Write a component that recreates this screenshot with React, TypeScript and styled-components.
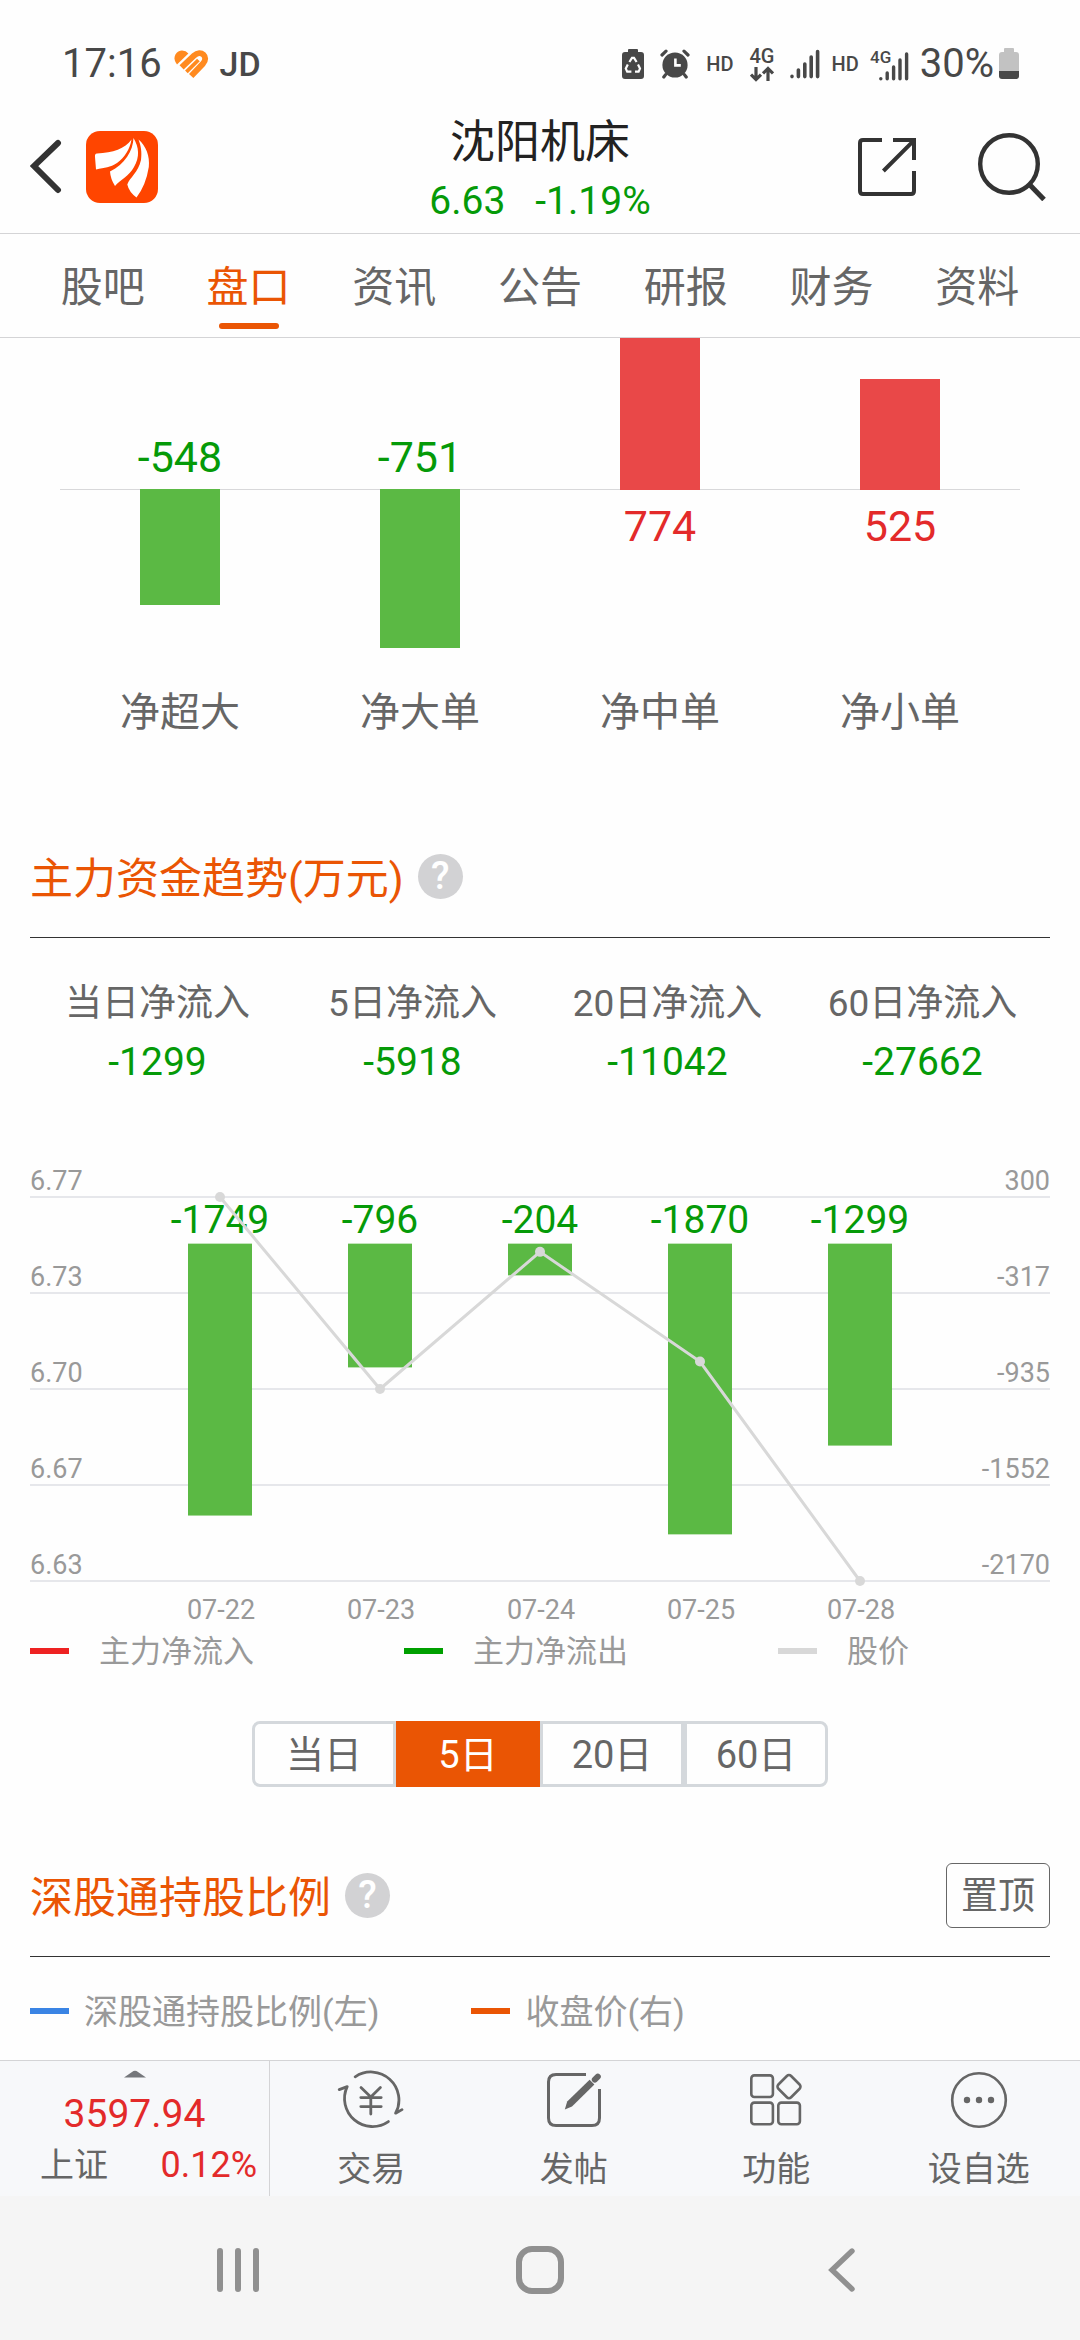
import React, { useState } from "react";
import styled, { createGlobalStyle } from "styled-components";

const color = {
  green: "#059a08",
  bar: "#5bb944",
  red: "#e32a2a",
  barRed: "#e94848",
  orange: "#ea5504",
  title: "#222222",
  text: "#666666",
  muted: "#999999",
  rule: "#d4d4d6",
  grid: "#e6e7eb",
  price: "#d8d8d8",
};

const GlobalStyle = createGlobalStyle`
  *, *::before, *::after { box-sizing: border-box; }
  body {
    margin: 0;
    background: #fefefe;
    font-family: Roboto, "Noto Sans CJK SC", sans-serif;
    color: ${color.text};
  }
  button {
    margin: 0;
    padding: 0;
    border: 0;
    background: none;
    font: inherit;
    color: inherit;
    cursor: pointer;
  }
  svg { display: block; flex: none; }
  h1, h2, p, dl, dd, ul { margin: 0; padding: 0; font-weight: 400; }
  ul { list-style: none; }
`;

const Page = styled.div`
  display: flex;
  flex-direction: column;
  min-height: 100vh;
`;

/* ---------- system status bar ---------- */

const StatusBar = styled.div`
  display: flex;
  align-items: center;
  justify-content: space-between;
  padding: 43px 61px 0 62px;
  color: #484848;
`;

const StatusGroup = styled.div<{ $gap: number }>`
  display: flex;
  align-items: center;
  gap: ${(p) => p.$gap}px;
  height: 42px;
`;

const StatusText = styled.span`
  font-size: 40px;
  line-height: 42px;
`;

const BrandText = styled.span`
  font-size: 34px;
  line-height: 42px;
  font-weight: 500;
`;

const SmallBadge = styled.span`
  font-size: 20px;
  line-height: 42px;
  font-weight: 500;
`;

const NetworkStack = styled.span`
  display: flex;
  flex-direction: column;
  align-items: center;
  font-size: 20px;
  line-height: 20px;
  font-weight: 500;
`;

/* ---------- stock header ---------- */

const Header = styled.header`
  display: grid;
  grid-template-columns: 1fr auto 1fr;
  align-items: center;
  height: 149px;
  padding: 16px 30px 0;
  border-bottom: 1px solid ${color.rule};
`;

const HeaderSide = styled.div<{ $end?: boolean }>`
  display: flex;
  align-items: center;
  justify-content: ${(p) => (p.$end ? "flex-end" : "flex-start")};
  gap: ${(p) => (p.$end ? 62 : 24)}px;
  padding-right: ${(p) => (p.$end ? 4 : 0)}px;
`;

const StockBlock = styled.div`
  padding-top: 10px;
  text-align: center;
`;

const StockName = styled.h1`
  font-size: 45px;
  line-height: 58px;
  color: ${color.title};
`;

const StockQuote = styled.p`
  display: flex;
  justify-content: center;
  gap: 30px;
  font-size: 39px;
  line-height: 58px;
  color: ${color.green};
`;

const TabBar = styled.nav`
  display: flex;
  padding: 0 30px;
  border-bottom: 1px solid ${color.rule};
`;

const Tab = styled.button<{ $active: boolean }>`
  flex: 1;
  display: flex;
  flex-direction: column;
  align-items: center;
  gap: 5px;
  padding: 24px 0 8px;
  font-size: 42px;
  line-height: 60px;
  color: ${(p) => (p.$active ? color.orange : color.text)};

  &::after {
    content: "";
    width: 60px;
    height: 6px;
    border-radius: 3px;
    background: ${(p) => (p.$active ? color.orange : "transparent")};
  }
`;

/* ---------- content ---------- */

const Main = styled.main`
  flex: 1;
`;

const Chart = styled.svg`
  width: 100%;
  height: auto;
`;

const Section = styled.section<{ $top: number }>`
  padding: ${(p) => p.$top}px 30px 0;
`;

const SectionHead = styled.div`
  display: flex;
  align-items: center;
  height: 94px;
  padding-bottom: 28px;
  border-bottom: 1px solid #333333;
`;

const SectionTitle = styled.h2`
  padding-top: 4px;
  font-size: 43px;
  line-height: 60px;
  color: ${color.orange};
`;

const HelpButton = styled.button`
  width: 45px;
  height: 45px;
  margin-left: 14px;
  border-radius: 50%;
  background: #d2d2d4;
  color: #ffffff;
  font-size: 38px;
  line-height: 45px;
  font-weight: 500;
  text-align: center;
`;

const PinButton = styled.button`
  width: 104px;
  height: 65px;
  margin-left: auto;
  padding-top: 2px;
  border: 1px solid ${color.text};
  border-radius: 6px;
  font-size: 37px;
  line-height: 60px;
  white-space: nowrap;
`;

const Stats = styled.dl`
  display: grid;
  grid-template-columns: repeat(4, 1fr);
  padding: 37px 0 69px;
  text-align: center;
  line-height: 58px;
`;

const StatLabel = styled.dt`
  font-size: 37px;
`;

const StatValue = styled.dd`
  font-size: 39px;
  color: ${color.green};
`;

const FlowLegend = styled.ul`
  display: grid;
  grid-template-columns: 11fr 11fr 8fr;
  padding-top: 2px;
`;

const HoldingLegend = styled.ul`
  display: flex;
  gap: 92px;
  padding: 31px 0 26px;
`;

const LegendItem = styled.li<{ $swatch: string; $gap: number; $size: number }>`
  display: flex;
  align-items: center;
  gap: ${(p) => p.$gap}px;
  font-size: ${(p) => p.$size}px;
  line-height: 46px;
  color: ${color.muted};
  white-space: nowrap;

  &::before {
    content: "";
    width: 39px;
    height: 6px;
    background: ${(p) => p.$swatch};
  }
`;

const LegendText = styled.span`
  padding-top: 2px;
  line-height: 44px;
`;

const Segments = styled.div`
  display: flex;
  justify-content: center;
  padding-top: 47px;
`;

const Segment = styled.button<{ $active: boolean }>`
  width: 144px;
  height: 66px;
  padding-top: 2px;
  border: 3px solid ${(p) => (p.$active ? color.orange : "#d4d8dc")};
  background: ${(p) => (p.$active ? color.orange : "transparent")};
  color: ${(p) => (p.$active ? "#ffffff" : color.text)};
  font-size: 38px;
  line-height: 58px;

  &:first-child { border-radius: 8px 0 0 8px; }
  &:last-child { border-radius: 0 8px 8px 0; }
`;

/* ---------- bottom bars ---------- */

const BottomBar = styled.footer`
  display: flex;
  height: 136px;
  border-top: 1px solid ${color.rule};
  background: #f7f8fa;
`;

const IndexPanel = styled.button`
  display: flex;
  flex-direction: column;
  align-items: center;
  flex: 0 0 25%;
  padding-top: 9px;
  border-right: 1px solid ${color.rule};
  color: ${color.red};
`;

const IndexValue = styled.span`
  margin-top: 11px;
  font-size: 39px;
  line-height: 50px;
`;

const IndexRow = styled.span`
  display: flex;
  justify-content: space-between;
  align-self: stretch;
  padding: 0 12px 0 40px;
  font-size: 36px;
  line-height: 52px;
`;

const IndexName = styled.span`
  font-size: 34px;
  color: ${color.text};
`;

const Action = styled.button`
  flex: 1;
  display: flex;
  flex-direction: column;
  align-items: center;
  gap: 15px;
  padding-top: 9px;
  font-size: 34px;
  line-height: 48px;
`;

const SystemNav = styled.div`
  display: flex;
  height: 144px;
  padding: 0 8%;
  background: #f5f5f5;
`;

const SystemButton = styled.button`
  flex: 1;
  display: flex;
  align-items: center;
  justify-content: center;
  padding-top: 4px;
`;

/* ---------- icons ---------- */

const HeartLogo = () => (
  <svg width="36" height="30" viewBox="0 0 36 30" fill="none" stroke="#ff8a1f" aria-hidden="true">
    <path d="M4 15.4C-1 10 2 2 9 1.6Q13 1.6 15.4 4.4Z" fill="#ff8a1f" stroke="none" />
    <path d="M8.600 18.400 21 6.600C28 0 36 8 30 14.600L18.200 27" strokeWidth="6" />
    <path d="M13.400 22.800 25.400 11" strokeWidth="3.800" />
  </svg>
);

const SaverBattery = () => (
  <svg width="22" height="32" viewBox="0 0 22 32" fill="none" aria-hidden="true">
    <path d="M7 1h8q1 0 1 1v2h3q3 0 3 3v21q0 3-3 3H3q-3 0-3-3V7q0-3 3-3h3V2q0-1 1-1z" fill="#484848" />
    <path d="M7.400 14 10 9.800h2l2.600 4.200M16 16.600l2 4-1.400 3H13M9.400 23.600H5.200l-1.400-3 2-4" stroke="#fff" strokeWidth="2.200" />
  </svg>
);

const AlarmClock = () => (
  <svg width="30" height="30" viewBox="0 0 30 30" fill="none" stroke="#484848" strokeLinecap="round" aria-hidden="true">
    <circle cx="15" cy="16" r="12.600" fill="#484848" stroke="none" />
    <path d="M2 6 6 2.200M28 6l-4-3.800M5.600 25.600 3.800 28M24.400 25.600l1.800 2.400" strokeWidth="3.200" />
    <path d="M15.400 9.400v7h5.400" stroke="#fff" strokeWidth="2.600" strokeLinecap="butt" />
  </svg>
);

const DataArrows = () => (
  <svg width="24" height="16" viewBox="0 0 24 16" fill="none" stroke="#484848" strokeWidth="3.200" aria-hidden="true">
    <path d="M6 1v12M1 8.600l5 5 5-5M18 15V3M13 7.400l5-5 5 5" />
  </svg>
);

const SignalBars = () => (
  <svg width="30" height="30" viewBox="0 0 30 30" stroke="#484848" strokeWidth="3.600" strokeLinecap="round" aria-hidden="true">
    <path d="M2 27.400v.200M8.400 21v6.600M14.800 15v12.600M21.200 8v19.600M27.600 2.600v25" />
  </svg>
);

const SignalWithNetwork = () => (
  <svg width="39" height="36" viewBox="0 0 39 36" stroke="#484848" strokeWidth="3.400" strokeLinecap="round" aria-hidden="true">
    <text x="0" y="17" fill="#484848" stroke="none" fontSize="17" fontWeight="500">4G</text>
    <path d="M10.800 32.600v.200M17.200 27v5.800M23.600 21v11.800M30 14v18.800M36.600 8v24.800" />
  </svg>
);

const BatteryLevel = () => (
  <svg width="20" height="34" viewBox="0 0 20 34" aria-hidden="true">
    <path d="M6 1h8q1 0 1 1v3h2q3 0 3 3v16H0V8q0-3 3-3h2V2q0-1 1-1z" fill="#c2c2c2" />
    <path d="M0 24h20v5q0 3-3 3H3q-3 0-3-3z" fill="#484848" />
  </svg>
);

const BackIcon = () => (
  <svg width="32" height="56" viewBox="0 0 32 56" fill="none" stroke="#333" strokeWidth="6" strokeLinecap="round" aria-hidden="true">
    <path d="M28 4 4 27l24 24" />
  </svg>
);

const AppLogo = () => (
  <svg width="72" height="72" viewBox="0 0 72 72" fill="#fff" aria-hidden="true">
    <rect width="72" height="72" rx="14" fill="#ff4500" />
    <path d="M45.500 8.500C39 18 27 21.500 11 22.500Q8.500 22.800 9 26L10 38.600C19 36 24 37 31 32C39 26 44 18 45.500 8.500Z" />
    <path d="M47.500 7C47 20 39 33 24 40.500Q24.500 48 29 55C34 49 43 45 48 36C54 26 53 16 47.500 7Z" />
    <path d="M52.500 8.500C60 15 64 25 62.800 36Q60 54 50.500 66.500Q43 61 41.300 53.500C44 46 52 42 55 29C56 21 55 15 52.500 8.500Z" />
  </svg>
);

const ShareIcon = () => (
  <svg width="58" height="58" viewBox="0 0 58 58" fill="none" stroke="#333" strokeWidth="4" aria-hidden="true">
    <path d="M24 2H5Q2 2 2 5v48q0 3 3 3h48q3 0 3-3V33M35 2h21v20M25.400 33 55 3.400" />
  </svg>
);

const SearchIcon = () => (
  <svg width="68" height="68" viewBox="0 0 68 68" fill="none" stroke="#333" strokeWidth="4.400" aria-hidden="true">
    <circle cx="31" cy="31" r="28.800" />
    <path d="m51.500 51.500 14.500 15" strokeWidth="5" />
  </svg>
);

const TradeIcon = () => (
  <svg width="68" height="60" viewBox="0 0 68 60" fill="none" stroke={color.text} strokeWidth="2.800" strokeLinecap="round" strokeLinejoin="round" aria-hidden="true">
    <path d="M18.200 6.800A28 28 0 0 1 58.600 43.200L65 39.600" />
    <path d="M2.200 19.600 10.200 16.600A28 28 0 0 0 51.400 51.600" />
    <path d="m24 17.600 9.800 9.400 9.600-9.400M33.800 27v17M23.800 27.600h20.400M23.800 36.600h20.400" />
  </svg>
);

const PostIcon = () => (
  <svg width="60" height="60" viewBox="0 0 60 60" fill="none" stroke={color.text} strokeWidth="3" aria-hidden="true">
    <path d="M42 4.500H12q-7.500 0-7.500 7.500v36q0 7.500 7.500 7.500h36q7.500 0 7.500-7.500V19" />
    <path d="m20.800 39.400 2.400-7.800L45.600 9.800l4.800 4.800L28 36.600z" fill={color.text} stroke="none" />
    <path d="m50.800 9.600 3-3" strokeWidth="6" strokeLinecap="round" />
  </svg>
);

const GridIcon = () => (
  <svg width="60" height="60" viewBox="0 0 60 60" fill="none" stroke={color.text} strokeWidth="2.600" aria-hidden="true">
    <rect x="5.300" y="5.400" width="21.600" height="21.600" rx="3" />
    <rect x="5.300" y="32.600" width="21.600" height="21.600" rx="3" />
    <rect x="32.300" y="32.600" width="21.600" height="21.600" rx="3" />
    <rect x="34" y="7.600" width="18" height="18" rx="3" transform="rotate(45 43 16.600)" />
  </svg>
);

const MoreIcon = () => (
  <svg width="60" height="60" viewBox="0 0 60 60" fill={color.text} aria-hidden="true">
    <circle cx="30" cy="30" r="26.800" fill="none" stroke={color.text} strokeWidth="2.600" />
    <circle cx="18" cy="30" r="3.200" />
    <circle cx="30" cy="30" r="3.200" />
    <circle cx="42" cy="30" r="3.200" />
  </svg>
);

const RecentsIcon = () => (
  <svg width="44" height="48" viewBox="0 0 44 48" stroke="#909090" strokeWidth="6" strokeLinecap="round" aria-hidden="true">
    <path d="M4 5v38M22 5v38M40 5v38" />
  </svg>
);

const HomeIcon = () => (
  <svg width="50" height="50" viewBox="0 0 50 50" fill="none" stroke="#909090" strokeWidth="6" aria-hidden="true">
    <rect x="4" y="4" width="42" height="42" rx="13" />
  </svg>
);

const NavBackIcon = () => (
  <svg width="28" height="48" viewBox="0 0 28 48" fill="none" stroke="#909090" strokeWidth="5.400" strokeLinecap="round" aria-hidden="true">
    <path d="M24 5 4 24l20 19" />
  </svg>
);

/* ---------- charts ---------- */

const orders = [
  { label: "净超大", value: -548 },
  { label: "净大单", value: -751 },
  { label: "净中单", value: 774 },
  { label: "净小单", value: 525 },
];

function OrderChart() {
  const zero = 152;
  const scale = 0.2117;
  return (
    <Chart viewBox="0 0 1080 422" role="img" aria-label="净流入分布" textAnchor="middle">
      <rect x="60" y="151" width="960" height="1" fill="#d8d8da" />
      {orders.map(({ label, value }, i) => {
        const x = 180 + i * 240;
        const h = Math.round(Math.abs(value) * scale);
        const up = value > 0;
        return (
          <g key={label}>
            <rect x={x - 40} y={up ? zero - h : zero - 1} width="80" height={h} fill={up ? color.barRed : color.bar} />
            <text x={x} y={up ? 203 : 134} fontSize="43" fill={up ? color.red : color.green}>{value}</text>
            <text x={x} y="388" fontSize="40" fill={color.text}>{label}</text>
          </g>
        );
      })}
    </Chart>
  );
}

const days = [
  { date: "07-22", flow: -1749, price: 6.77 },
  { date: "07-23", flow: -796, price: 6.7 },
  { date: "07-24", flow: -204, price: 6.75 },
  { date: "07-25", flow: -1870, price: 6.71 },
  { date: "07-28", flow: -1299, price: 6.63 },
];

const levels = [
  ["6.77", "300"],
  ["6.73", "-317"],
  ["6.70", "-935"],
  ["6.67", "-1552"],
  ["6.63", "-2170"],
];

function TrendChart() {
  const top = 37;
  const span = 384;
  const zero = top + (300 / 2470) * span;
  const dayX = (i: number) => 190 + i * 160;
  const priceY = (p: number) => top + ((6.77 - p) / 0.14) * span;
  return (
    <Chart viewBox="0 0 1020 466" role="img" aria-label="主力资金趋势" fontSize="27" fill={color.muted}>
      {levels.map(([left, right], i) => {
        const y = top + (i * span) / 4;
        return (
          <g key={left}>
            <rect x="0" y={y - 1} width="1020" height="2" fill={color.grid} />
            <text x="0" y={y - 7}>{left}</text>
            <text x="1020" y={y - 7} textAnchor="end">{right}</text>
          </g>
        );
      })}
      {days.map(({ date, flow }, i) => (
        <g key={date} textAnchor="middle">
          <rect x={dayX(i) - 32} y={zero} width="64" height={(-flow * span) / 2470} fill={color.bar} />
          <text x={dayX(i)} y="73" fontSize="39" fill={color.green}>{flow}</text>
          <text x={dayX(i) + 1} y="459">{date}</text>
        </g>
      ))}
      <polyline
        points={days.map((d, i) => `${dayX(i)},${priceY(d.price)}`).join(" ")}
        fill="none"
        stroke={color.price}
        strokeWidth="3"
      />
      {days.map((d, i) => (
        <circle key={d.date} cx={dayX(i)} cy={priceY(d.price)} r="5" fill={color.price} />
      ))}
    </Chart>
  );
}

/* ---------- page ---------- */

const tabs = ["股吧", "盘口", "资讯", "公告", "研报", "财务", "资料"];
const ranges = ["当日", "5日", "20日", "60日"];
const totals = [
  ["当日净流入", "-1299"],
  ["5日净流入", "-5918"],
  ["20日净流入", "-11042"],
  ["60日净流入", "-27662"],
];
const flowKeys = [
  ["主力净流入", "#ee2222"],
  ["主力净流出", "#00a000"],
  ["股价", color.price],
];
const holdingKeys = [
  ["深股通持股比例(左)", "#3a84e4"],
  ["收盘价(右)", color.orange],
];
const actions = [
  { label: "交易", Icon: TradeIcon },
  { label: "发帖", Icon: PostIcon },
  { label: "功能", Icon: GridIcon },
  { label: "设自选", Icon: MoreIcon },
];

export default function App() {
  const [tab, setTab] = useState("盘口");
  const [range, setRange] = useState("5日");

  return (
    <Page>
      <GlobalStyle />
      <StatusBar>
        <StatusGroup $gap={11}>
          <StatusText>17:16</StatusText>
          <HeartLogo />
          <BrandText>JD</BrandText>
        </StatusGroup>
        <StatusGroup $gap={16}>
          <SaverBattery />
          <AlarmClock />
          <SmallBadge>HD</SmallBadge>
          <NetworkStack>
            4G
            <DataArrows />
          </NetworkStack>
          <StatusGroup $gap={11}>
            <SignalBars />
            <SmallBadge>HD</SmallBadge>
            <SignalWithNetwork />
            <StatusGroup $gap={5}>
              <StatusText>30%</StatusText>
              <BatteryLevel />
            </StatusGroup>
          </StatusGroup>
        </StatusGroup>
      </StatusBar>

      <Header>
        <HeaderSide>
          <button aria-label="返回"><BackIcon /></button>
          <AppLogo />
        </HeaderSide>
        <StockBlock>
          <StockName>沈阳机床</StockName>
          <StockQuote>
            <span>6.63</span>
            <span>-1.19%</span>
          </StockQuote>
        </StockBlock>
        <HeaderSide $end>
          <button aria-label="分享"><ShareIcon /></button>
          <button aria-label="搜索"><SearchIcon /></button>
        </HeaderSide>
      </Header>

      <TabBar>
        {tabs.map((name) => (
          <Tab key={name} $active={name === tab} onClick={() => setTab(name)}>
            {name}
          </Tab>
        ))}
      </TabBar>

      <Main>
        <OrderChart />

        <Section $top={84}>
          <SectionHead>
            <SectionTitle>主力资金趋势(万元)</SectionTitle>
            <HelpButton>?</HelpButton>
          </SectionHead>
          <Stats>
            {totals.map(([label, value]) => (
              <div key={label}>
                <StatLabel>{label}</StatLabel>
                <StatValue>{value}</StatValue>
              </div>
            ))}
          </Stats>
          <TrendChart />
          <FlowLegend>
            {flowKeys.map(([label, swatch]) => (
              <LegendItem key={label} $swatch={swatch} $gap={30} $size={31}>
                <LegendText>{label}</LegendText>
              </LegendItem>
            ))}
          </FlowLegend>
          <Segments>
            {ranges.map((name) => (
              <Segment
                key={name}
                $active={name === range}
                aria-pressed={name === range}
                onClick={() => setRange(name)}
              >
                {name}
              </Segment>
            ))}
          </Segments>
        </Section>

        <Section $top={76}>
          <SectionHead>
            <SectionTitle>深股通持股比例</SectionTitle>
            <HelpButton>?</HelpButton>
            <PinButton>置顶</PinButton>
          </SectionHead>
          <HoldingLegend>
            {holdingKeys.map(([label, swatch]) => (
              <LegendItem key={label} $swatch={swatch} $gap={15} $size={34}>
                <LegendText>{label}</LegendText>
              </LegendItem>
            ))}
          </HoldingLegend>
        </Section>
      </Main>

      <BottomBar>
        <IndexPanel>
          <svg width="22" height="8" viewBox="0 0 22 8" fill="#75777b" aria-hidden="true">
            <path d="M0 7.500 8 2Q11-.4 14 2l8 5.500z" />
          </svg>
          <IndexValue>3597.94</IndexValue>
          <IndexRow>
            <IndexName>上证</IndexName>
            <span>0.12%</span>
          </IndexRow>
        </IndexPanel>
        {actions.map(({ label, Icon }) => (
          <Action key={label}>
            <Icon />
            {label}
          </Action>
        ))}
      </BottomBar>

      <SystemNav>
        <SystemButton aria-label="最近任务"><RecentsIcon /></SystemButton>
        <SystemButton aria-label="主屏幕"><HomeIcon /></SystemButton>
        <SystemButton aria-label="后退"><NavBackIcon /></SystemButton>
      </SystemNav>
    </Page>
  );
}
